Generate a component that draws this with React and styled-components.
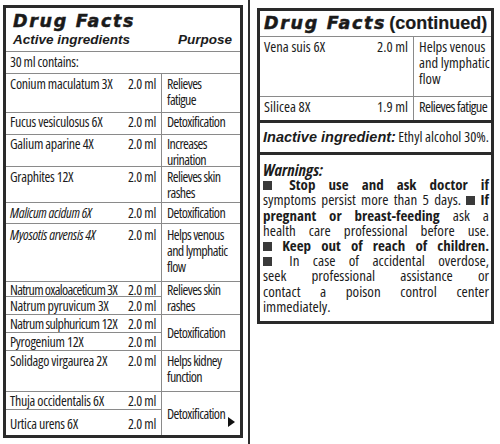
import React from "react";
import styled, { createGlobalStyle } from "styled-components";

const GlobalStyle = createGlobalStyle`
  html, body {
    margin: 0;
    padding: 0;
    background: #ffffff;
  }
  body {
    font-family: "Open Sans", "Liberation Sans", Arial, sans-serif;
    font-stretch: 75%;
    color: #1c1c1c;
  }
  * {
    box-sizing: border-box;
  }
`;

const Page = styled.div`
  display: flex;
  align-items: flex-start;
  width: 500px;
  height: 444px;
  overflow: hidden;
`;

const Panel = styled.div`
  width: ${(p) => p.$w}px;
  margin: ${(p) => p.$top}px 0 0 ${(p) => p.$left}px;
  border: 3px solid #2a2a2a;
  display: flex;
  flex-direction: column;
`;

const Divider = styled.div`
  width: 2px;
  height: 444px;
  margin-left: 5px;
  background: #2e2e2e;
`;

const TitleBlock = styled.div`
  padding: ${(p) => p.$pt}px 8px 0 ${(p) => p.$pl}px;
  height: ${(p) => p.$h}px;
  border-bottom: 1px solid #8a8a8a;
  display: flex;
  flex-direction: column;
`;

const BigTitle = styled.span`
  font-family: "DejaVu Sans", "Liberation Sans", sans-serif;
  font-stretch: 100%;
  font-weight: 700;
  font-style: oblique;
  font-size: 17.5px;
  line-height: 20px;
  letter-spacing: 1.7px;
  color: #1a1a1a;
  -webkit-text-stroke: 0.5px #1a1a1a;
  white-space: nowrap;
`;

const Continued = styled.span`
  font-family: "Liberation Sans", Arial, sans-serif;
  font-size: 18px;
  font-style: normal;
  letter-spacing: 0;
  -webkit-text-stroke: 0.2px #1a1a1a;
  margin-left: 3px;
`;

const SubHead = styled.div`
  display: flex;
  justify-content: space-between;
  font-family: "Liberation Sans", Arial, sans-serif;
  font-stretch: 100%;
  font-weight: 700;
  font-style: italic;
  font-size: 13.5px;
  line-height: 16px;
  margin-top: 1px;
`;

const Table = styled.div`
  display: grid;
  grid-template-columns: minmax(0, 1fr) auto ${(p) => p.$purpose}px;
  grid-template-rows: ${(p) => p.$rows};
  font-size: ${(p) => p.$size}px;
  letter-spacing: ${(p) => p.$ls}px;
  line-height: 16px;
`;

const FullCell = styled.div`
  grid-column: 1 / -1;
  padding: 2px 4px 0;
  border-bottom: 1px solid #8a8a8a;
`;

const NameCell = styled.div`
  padding: ${(p) => p.$pt}px 0 0 4px;
  font-style: ${(p) => (p.$italic ? "italic" : "normal")};
  letter-spacing: ${(p) => (p.$ls != null ? `${p.$ls}px` : "inherit")};
  white-space: nowrap;
  border-bottom: ${(p) => (p.$last ? "none" : "1px solid #8a8a8a")};
`;

const AmountCell = styled.div`
  padding: ${(p) => p.$pt}px 5px 0 4px;
  text-align: right;
  white-space: nowrap;
  border-bottom: ${(p) => (p.$last ? "none" : "1px solid #8a8a8a")};
`;

const PurposeCell = styled.div`
  grid-row: span ${(p) => p.$span};
  padding: ${(p) => (p.$center ? 0 : p.$pt)}px 5px 0 5px;
  border-left: 1px solid #8a8a8a;
  border-bottom: ${(p) => (p.$last ? "none" : "1px solid #8a8a8a")};
  letter-spacing: ${(p) => p.$ls}px;
  white-space: nowrap;
  display: flex;
  align-items: ${(p) => (p.$center ? "center" : "flex-start")};
  justify-content: space-between;
`;

const Arrow = styled.span`
  width: 0;
  height: 0;
  margin-top: 16px;
  border-top: 5px solid transparent;
  border-bottom: 5px solid transparent;
  border-left: 7px solid #111;
`;

const ThickBlock = styled.div`
  border-top: 3px solid #2a2a2a;
  height: ${(p) => p.$h}px;
  padding: ${(p) => p.$pt}px 2px 0 3px;
`;

const InactiveLine = styled.div`
  font-size: 14.5px;
  line-height: 18px;
  white-space: nowrap;
  display: flex;
  justify-content: space-between;
`;

const BoldItalic = styled.span`
  font-family: "Liberation Sans", Arial, sans-serif;
  font-stretch: 100%;
  font-weight: 700;
  font-style: italic;
  font-size: 14.5px;
`;

const Line = styled.div`
  font-size: 15px;
  line-height: 15.2px;
  text-align: justify;
  text-align-last: ${(p) => (p.$last ? "left" : "justify")};
`;

const WarnTitle = styled.div`
  font-size: 16.5px;
  line-height: 15.2px;
  font-weight: 700;
  font-style: italic;
`;

const Strong = styled.span`
  font-weight: 700;
`;

const Bullet = styled.span`
  display: inline-block;
  width: 9px;
  height: 9px;
  background: #3a3a3a;
  margin-right: ${(p) => p.$gap || 0}px;
`;

const leftRows = [
  { name: "Conium maculatum 3X", h: 39, pt: 2, purpose: ["Relieves", "fatigue"] },
  { name: "Fucus vesiculosus 6X", h: 22, pt: 1, purpose: ["Detoxification"] },
  { name: "Galium aparine 4X", h: 32, pt: 1, purpose: ["Increases", "urination"] },
  { name: "Graphites 12X", h: 36, pt: 2, purpose: ["Relieves skin", "rashes"] },
  { name: "Malicum acidum 6X", h: 21, pt: 2, italic: true, purpose: ["Detoxification"] },
  { name: "Myosotis arvensis 4X", h: 58, pt: 3, italic: true, purpose: ["Helps venous", "and lymphatic", "flow"] },
  { name: "Natrum oxaloaceticum 3X", h: 15, pt: 0, ls: -0.7, span: 2, purpose: ["Relieves skin", "rashes"] },
  { name: "Natrum pyruvicum 3X", h: 18, pt: 1 },
  { name: "Natrum sulphuricum 12X", h: 18, pt: 1, ls: -0.6, span: 2, center: true, purpose: ["Detoxification"] },
  { name: "Pyrogenium 12X", h: 18, pt: 1 },
  { name: "Solidago virgaurea 2X", h: 41, pt: 2, purpose: ["Helps kidney", "function"] },
  { name: "Thuja occidentalis 6X", h: 18, pt: 1, span: 2, center: true, arrow: true, purpose: ["Detoxification"] },
  { name: "Urtica urens 6X", h: 25, pt: 6 },
];

const rightRows = [
  { name: "Vena suis 6X", amt: "2.0 ml", h: 60, pt: 2, purposeLs: 0, purpose: ["Helps venous", "and lymphatic", "flow"] },
  { name: "Silicea 8X", amt: "1.9 ml", h: 23, pt: 2, purposeLs: -0.6, purpose: ["Relieves fatigue"], last: true },
];

const Lines = ({ items }) =>
  items.map((t, i) => (
    <React.Fragment key={t}>
      {i > 0 && <br />}
      {t}
    </React.Fragment>
  ));

const IngredientRows = ({ rows, purposeLs }) => {
  const lastIndex = rows.length - 1;
  return rows.map((row, i) => {
    const last = row.last || i === lastIndex;
    const spanEndsLast = row.span && i + row.span - 1 === lastIndex;
    return (
      <React.Fragment key={row.name}>
        <NameCell $italic={row.italic} $pt={row.pt} $ls={row.ls} $last={last}>
          {row.name}
        </NameCell>
        <AmountCell $pt={row.pt} $last={last}>
          {row.amt || "2.0 ml"}
        </AmountCell>
        {row.purpose && (
          <PurposeCell
            $span={row.span || 1}
            $center={row.center}
            $pt={row.pt}
            $ls={row.purposeLs ?? purposeLs}
            $last={last || spanEndsLast}
          >
            <span>
              <Lines items={row.purpose} />
            </span>
            {row.arrow && <Arrow />}
          </PurposeCell>
        )}
      </React.Fragment>
    );
  });
};

const App = () => {
  const leftTemplate = ["22px", ...leftRows.map((r) => r.h + "px")].join(" ");
  const rightTemplate = rightRows.map((r) => r.h + "px").join(" ");

  return (
    <>
      <GlobalStyle />
      <Page>
        <Panel $w={240} $top={5} $left={3}>
          <TitleBlock $h={44} $pt={3} $pl={7}>
            <BigTitle>Drug Facts</BigTitle>
            <SubHead>
              <span>Active ingredients</span>
              <span>Purpose</span>
            </SubHead>
          </TitleBlock>
          <Table $purpose={79} $rows={leftTemplate} $size={14} $ls={-0.3}>
            <FullCell>30 ml contains:</FullCell>
            <IngredientRows rows={leftRows} purposeLs={-0.6} />
          </Table>
        </Panel>

        <Divider />

        <Panel $w={237} $top={8} $left={7}>
          <TitleBlock $h={26} $pt={2} $pl={4}>
            <BigTitle>
              Drug Facts<Continued>(continued)</Continued>
            </BigTitle>
          </TitleBlock>
          <Table $purpose={78} $rows={rightTemplate} $size={14.5} $ls={0}>
            <IngredientRows rows={rightRows} purposeLs={0} />
          </Table>
          <ThickBlock $h={32} $pt={5}>
            <InactiveLine>
              <BoldItalic>Inactive ingredient:</BoldItalic>
              <span>Ethyl alcohol 30%.</span>
            </InactiveLine>
          </ThickBlock>
          <ThickBlock $h={169} $pt={7}>
            <WarnTitle>Warnings:</WarnTitle>
            <Line>
              <Bullet $gap={4} /> <Strong>Stop use and ask doctor if</Strong>
            </Line>
            <Line>
              symptoms persist more than 5 days. <Bullet /> <Strong>If</Strong>
            </Line>
            <Line>
              <Strong>pregnant or breast-feeding</Strong> ask a
            </Line>
            <Line>health care professional before use.</Line>
            <Line>
              <Bullet /> <Strong>Keep out of reach of children.</Strong>
            </Line>
            <Line>
              <Bullet $gap={4} /> In case of accidental overdose,
            </Line>
            <Line>seek professional assistance or</Line>
            <Line>contact a poison control center</Line>
            <Line $last>immediately.</Line>
          </ThickBlock>
        </Panel>
      </Page>
    </>
  );
};

export default App;
